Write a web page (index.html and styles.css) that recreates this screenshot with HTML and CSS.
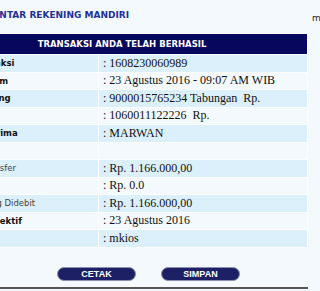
FILE: index.html
```html
<!DOCTYPE html>
<html lang="en">
<head>
    <meta charset="UTF-8">
    <title>Transfer Antar Rekening Mandiri</title>
    <link rel="stylesheet" href="styles.css">
</head>
<body>
    <div class="page">
        <div class="main">
            <div class="title">TRANSFER ANTAR REKENING MANDIRI</div>
            <table class="receipt">
                <tr>
                    <th colspan="2">TRANSAKSI ANDA TELAH BERHASIL</th>
                </tr>
                <tr class="alt">
                    <td class="label">No. Transaksi</td>
                    <td class="value">: 1608230060989</td>
                </tr>
                <tr>
                    <td class="label">Tanggal Jam</td>
                    <td class="value">: 23 Agustus 2016 - 09:07 AM WIB</td>
                </tr>
                <tr class="alt">
                    <td class="label">No Rekening</td>
                    <td class="value">: 9000015765234 Tabungan&nbsp; Rp.</td>
                </tr>
                <tr>
                    <td class="label">Tujuan</td>
                    <td class="value">: 1060011122226&nbsp; Rp.</td>
                </tr>
                <tr class="alt">
                    <td class="label">Nm. Penerima</td>
                    <td class="value">: MARWAN</td>
                </tr>
                <tr>
                    <td class="label"></td>
                    <td class="value"></td>
                </tr>
                <tr class="alt">
                    <td class="label light">Jumlah Transfer</td>
                    <td class="value">: Rp. 1.166.000,00</td>
                </tr>
                <tr>
                    <td class="label light">Biaya</td>
                    <td class="value">: Rp. 0.0</td>
                </tr>
                <tr class="alt">
                    <td class="label light">Jumlah Yang Didebit</td>
                    <td class="value">: Rp. 1.166.000,00</td>
                </tr>
                <tr>
                    <td class="label">Tanggal Efektif</td>
                    <td class="value">: 23 Agustus 2016</td>
                </tr>
                <tr class="alt">
                    <td class="label">Berita</td>
                    <td class="value">: mkios</td>
                </tr>
            </table>
            <div class="actions">
                <button class="btn">CETAK</button>
                <button class="btn">SIMPAN</button>
            </div>
            <div class="rule"></div>
        </div>
        <div class="side">menu</div>
    </div>
</body>
</html>
```

FILE: styles.css
```css
* {
    margin: 0;
    padding: 0;
    box-sizing: border-box;
}

body {
    background: #f4f9fe;
    font-family: 'DejaVu Sans', Verdana, sans-serif;
    overflow: hidden;
}

.page {
    display: flex;
    align-items: flex-start;
    margin-left: -64px;
    width: 420px;
}

.main {
    width: 372px;
    flex: none;
}

.title {
    margin-top: 10px;
    font-size: 9px;
    line-height: 10px;
    font-weight: bold;
    color: #22319a;
    white-space: nowrap;
}

.receipt {
    margin-top: 13px;
    width: 372px;
    border-collapse: separate;
    border-spacing: 1px;
    background: #fbfdff;
}

.receipt th {
    height: 20px;
    background: #07075e;
    color: #fff;
    font-size: 8.5px;
    font-weight: bold;
    text-align: center;
}

.receipt td {
    height: 16.5px;
    padding: 0;
    vertical-align: middle;
    background: #f4f9fe;
    white-space: nowrap;
}

.receipt tr.alt td {
    background: #dcf0fc;
}

.label {
    width: 161px;
    padding-left: 13px !important;
    font-size: 8.5px;
    font-weight: bold;
    color: #111;
}

.label.light {
    font-weight: normal;
    color: #444;
}

.value {
    padding-left: 4px !important;
    font-family: 'Liberation Serif', 'Times New Roman', serif;
    font-size: 12px;
    color: #111;
}

.actions {
    display: flex;
    gap: 25px;
    padding-left: 121px;
    margin-top: 19px;
}

.btn {
    width: 79px;
    height: 14px;
    border: 1px solid #8d90b0;
    border-radius: 7px;
    background: #1d2064;
    color: #fff;
    font-family: 'Liberation Sans', Arial, sans-serif;
    font-size: 9px;
    font-weight: bold;
    line-height: 12px;
}

.rule {
    margin-top: 6px;
    border-top: 2px solid #555;
}

.side {
    flex: none;
    width: 40px;
    margin-left: 4px;
    padding-top: 13px;
    font-size: 9px;
    line-height: 10px;
    color: #222;
}
```
